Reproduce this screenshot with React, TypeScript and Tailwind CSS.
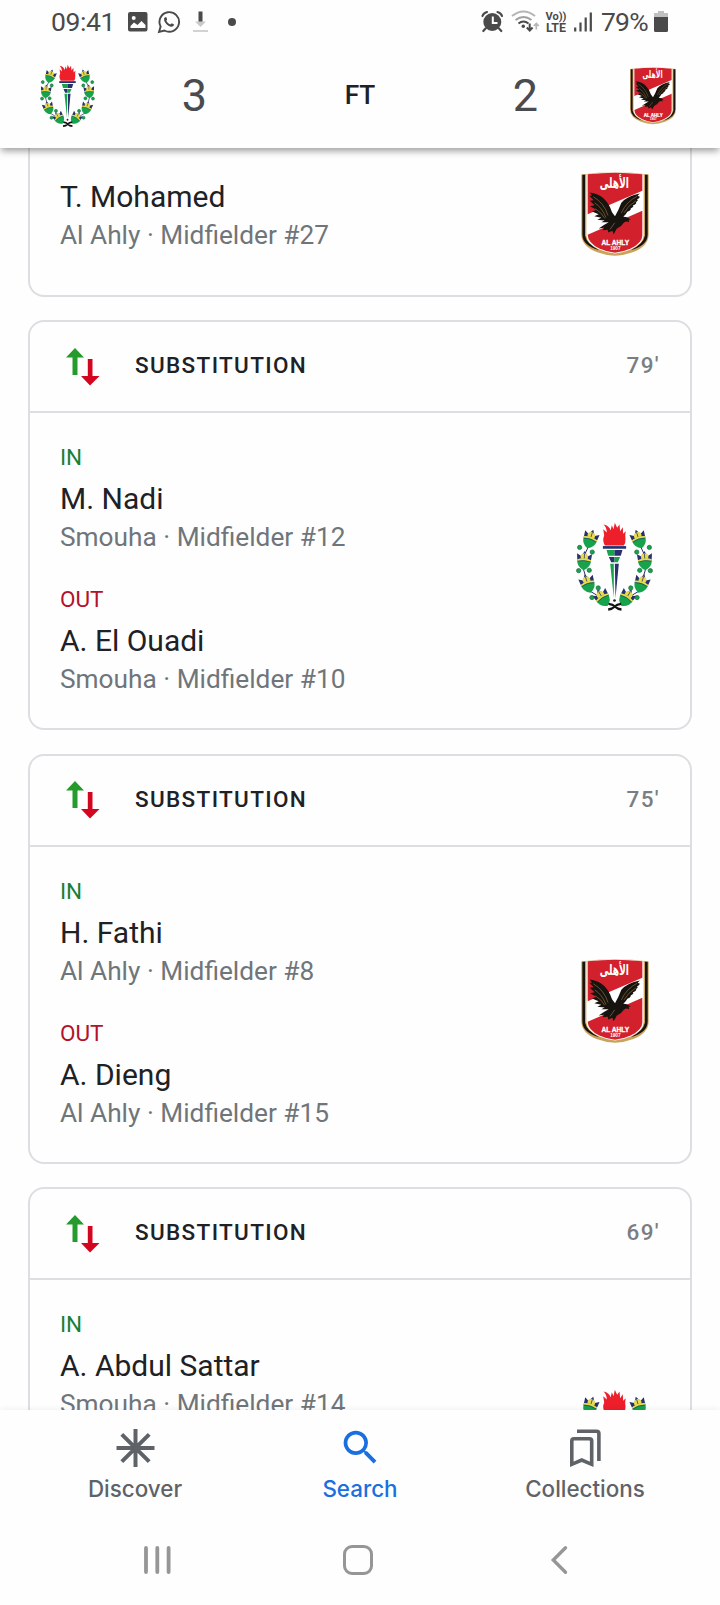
import { MdSearch } from "react-icons/md";

type Team = "smouha" | "ahly";

type Player = { name: string; info: string };

type Substitution = {
  minute: string;
  team: Team;
  playerIn: Player;
  playerOut?: Player;
};

const substitutions: Substitution[] = [
  {
    minute: "79'",
    team: "smouha",
    playerIn: { name: "M. Nadi", info: "Smouha · Midfielder #12" },
    playerOut: { name: "A. El Ouadi", info: "Smouha · Midfielder #10" },
  },
  {
    minute: "75'",
    team: "ahly",
    playerIn: { name: "H. Fathi", info: "Al Ahly · Midfielder #8" },
    playerOut: { name: "A. Dieng", info: "Al Ahly · Midfielder #15" },
  },
  {
    minute: "69'",
    team: "smouha",
    playerIn: { name: "A. Abdul Sattar", info: "Smouha · Midfielder #14" },
  },
];

function AhlyCrest({ className }: { className: string }) {
  return (
    <svg viewBox="60 30 210 260" className={className}>
      <path d="M64 43Q165 30 266 43V222Q266 258 218 276Q190 286 165 287Q140 286 112 276Q64 258 64 222Z" fill="#c9a35c" />
      <path d="M67 44H75V226Q80 252 118 270Q67 256 67 222Z" fill="#17130f" />
      <path d="M263 44H255V226Q250 252 212 270Q263 256 263 222Z" fill="#17130f" />
      <path d="M79 42Q165 30 251 42V226Q250 250 214 267Q188 278 165 280Q142 278 116 267Q80 250 79 226Z" fill="#fff" />
      <path d="M83 42Q165 33 247 42V92L83 162Z" fill="#d2202c" />
      <path d="M247 152V226Q247 248 212 265Q188 276 165 278Q142 276 118 265Q84 249 83 224Z" fill="#d2202c" />
      <path
        d="M89 97Q114 99 132 116Q148 132 156 156L165 168Q176 150 184 128Q200 108 240 100Q228 109 238 108Q242 112 230 118Q238 118 228 126Q232 130 218 136Q224 139 212 145Q214 150 202 155Q198 163 190 170Q204 170 212 179L207 181L207 186Q200 182 192 187Q184 200 170 206L161 222L157 212L145 217L143 209L128 210L132 203L116 205L133 194L146 186L124 186L134 181L112 179L124 173L103 168L116 162L96 154L109 149L90 138L104 135L89 122L101 120L88 107L96 107Z"
        fill="#17130f"
      />
      <path d="M100 110Q132 128 144 166M104 128Q126 142 138 172M106 146Q124 156 134 174M232 108Q200 124 184 158M228 122Q204 136 192 158M164 188L150 208M206 180L211 180" stroke="#8f723f" strokeWidth="2" fill="none" />
      <text x="163" y="84" textAnchor="middle" fontSize="45" fontWeight="700" fill="#fff" fontFamily="'DejaVu Sans', sans-serif" textLength="88" lengthAdjust="spacingAndGlyphs">
        الأهلى
      </text>
      <text x="166" y="255" textAnchor="middle" fontSize="20" fontWeight="900" fill="#fff" stroke="#fff" strokeWidth="1" fontFamily="'Liberation Sans', sans-serif" textLength="83" lengthAdjust="spacingAndGlyphs">
        AL AHLY
      </text>
      <text x="166" y="270" textAnchor="middle" fontSize="14" fontWeight="700" fill="#fff" fontFamily="'Liberation Sans', sans-serif">
        1907
      </text>
    </svg>
  );
}

function Flower({ x, y, angle }: { x: number; y: number; angle: number }) {
  return (
    <g transform={`translate(${x} ${y}) rotate(${angle}) scale(1.08)`}>
      <path d="M-19 -6L-21 -25L-9 -18L0 -33L9 -18L21 -25L19 -6Z" fill="#28306e" />
      <path d="M-9 -8Q-13 -18 -9 -23L0 -27L8 -23Q13 -16 9 -8Z" fill="#eadb4e" />
      <path d="M0 -26V-10" stroke="#28306e" strokeWidth="2" />
      <path d="M-19 -8Q0 -15 19 -8Q20 12 0 21Q-20 12 -19 -8Z" fill="#16a34b" />
      <path d="M-19 -6Q0 -13 19 -6" stroke="#eadb4e" strokeWidth="5" fill="none" />
      <path d="M-19 -3Q0 -9 19 -3" stroke="#28306e" strokeWidth="1.5" fill="none" />
    </g>
  );
}

const berries = [
  [60, 111],
  [98, 125],
  [57, 181],
  [89, 180],
  [97, 262],
  [116, 233],
];

function HalfWreath() {
  return (
    <>
      <path d="M88 105L74 135M70 172L80 205M90 242L124 262" stroke="#28306e" strokeWidth="3" />
      <Flower x={90} y={92} angle={18} />
      <Flower x={73} y={157} angle={4} />
      <Flower x={86} y={226} angle={-18} />
      <Flower x={132} y={268} angle={-32} />
      {berries.map(([cx, cy]) => (
        <circle key={`${cx}-${cy}`} cx={cx} cy={cy} r="6.5" fill="#16a34b" stroke="#14643c" strokeWidth="2" />
      ))}
    </>
  );
}

function SmouhaCrest({ className }: { className: string }) {
  return (
    <svg viewBox="40 30 250 280" className={className}>
      <HalfWreath />
      <g transform="translate(330 0) scale(-1 1)">
        <HalfWreath />
      </g>
      <path
        d="M136 105Q127 90 134 75L131 56L142 66Q141 50 132 42Q150 46 153 60L157 44L162 56L166 37L173 52L180 42L182 62L190 50L191 70L199 62Q196 76 198 84Q199 98 193 105Z"
        fill="#ec1f2b"
      />
      <path d="M130 107H200V115H130Z" fill="#28306e" />
      <path d="M141 119H165V136H146Z" fill="#16a34b" />
      <path d="M165 119H189L184 136H165Z" fill="#28306e" />
      <path d="M148 140H165V156H155Z" fill="#28306e" />
      <path d="M165 140H182L175 156H165Z" fill="#16a34b" />
      <path d="M152 160H163V263Z" fill="#16a34b" />
      <path d="M166 160H178L168 263Z" fill="#28306e" />
      <path d="M147 281Q160 282 166 289Q174 297 186 298M185 281Q172 282 166 289Q158 297 146 298" stroke="#111" strokeWidth="7" fill="none" />
      <circle cx="165" cy="271" r="4" fill="#222" />
    </svg>
  );
}

function Crest({ team, small }: { team: Team; small?: boolean }) {
  if (team === "ahly") {
    return <AhlyCrest className={small ? "w-[48px] h-[59px]" : "w-[70px] h-[87px]"} />;
  }
  return <SmouhaCrest className={small ? "w-[59px] h-[66px]" : "w-[84px] h-[94px]"} />;
}

function StatusBar() {
  return (
    <div className="flex h-[44px] items-center pl-[51px] text-[26.5px] text-[#4a4a4a]">
      <span className="w-[63px] tracking-[-0.4px]">09:41</span>
      <svg width="22" height="24" viewBox="0 0 22 24" className="ml-[13px]">
        <path
          fillRule="evenodd"
          d="M3 2H18.500Q20.500 2 20.500 4V19.500Q20.500 21.500 18.500 21.500H3Q1 21.500 1 19.500V4Q1 2 3 2ZM3.500 18H18.500V15L14.500 11L10.500 15L7 12.500L3.500 16ZM6.700 6A2 2 0 1 0 6.700 10A2 2 0 1 0 6.700 6Z"
          fill="currentColor"
        />
      </svg>
      <svg width="24" height="24" viewBox="0 0 24 24" className="ml-2" fill="none" stroke="currentColor">
        <path d="M2 22L3.600 16.500A9.800 9.800 0 1 1 7.500 20.500Z" strokeWidth="1.900" />
        <path d="M8 7.200Q6.300 8.500 7.300 11Q9.500 15.500 13.800 16.800Q16.300 17 17.300 14.800L14.800 13.200L13.200 14.600Q10.500 13.300 9.300 10.800L10.200 9.500L9.200 7Z" fill="currentColor" stroke="none" />
      </svg>
      <svg width="17" height="24" viewBox="0 0 17 24" className="ml-[11px]">
        <path d="M6.500 1.500H10.500V12H6.500Z" fill="#4a4a4a" />
        <path d="M3 11.500H14L8.500 17Z" fill="#c9c9c9" />
        <path d="M1 21H16" stroke="#d2d2d2" strokeWidth="2" />
      </svg>
      <span className="ml-[19px] size-2 rounded-full bg-[#4a4a4a]" />

      <svg width="23" height="24" viewBox="0 0 23 24" className="ml-[245px]">
        <circle cx="11.300" cy="12" r="9" fill="currentColor" />
        <path d="M1.500 6Q2.500 3 6 2M21 6Q20 3 16.500 2M4.500 18.500L2.300 21M18 18.500L20.300 21" stroke="currentColor" strokeWidth="2.200" strokeLinecap="round" fill="none" />
        <path d="M11.800 6.500V13H16.500" stroke="#fff" strokeWidth="2" fill="none" />
      </svg>
      <svg width="29" height="24" viewBox="0 0 29 24" className="ml-[7px]" fill="none" strokeWidth="2">
        <path d="M1 6Q12.500 -3 24 6" stroke="#b5b5b5" />
        <path d="M4.500 10Q12.500 4 20.500 10" stroke="#a0a0a0" />
        <path d="M7.500 13.500Q12.500 9.500 17.500 13.500" stroke="#4a4a4a" />
        <circle cx="12.300" cy="16.200" r="1.700" fill="#4a4a4a" />
        <path d="M18.700 13.500V20.500M15.800 17.500L18.700 20.500L21.600 17.500" stroke="#4a4a4a" />
        <path d="M25.300 19.500V13.500M22.800 16L25.300 13.500L27.800 16" stroke="#b5b5b5" strokeWidth="1.700" />
      </svg>
      <svg width="22" height="24" viewBox="0 0 22 24" className="ml-[5px]" fill="currentColor" fontFamily="Roboto, sans-serif" fontWeight="700">
        <text x="0.500" y="10" fontSize="11.500" textLength="21" lengthAdjust="spacingAndGlyphs">Vo))</text>
        <text x="1" y="21.500" fontSize="13" textLength="20" lengthAdjust="spacingAndGlyphs">LTE</text>
      </svg>
      <svg width="20" height="24" viewBox="0 0 20 24" className="ml-[6px]" stroke="currentColor" strokeWidth="2.200">
        <path d="M2.200 17.500V21.500M7.500 12.500V21.500M12.700 7.500V21.500M17.800 2.500V21.500" />
      </svg>
      <span className="ml-[8px] w-[48px] tracking-[-0.800px]">79%</span>
      <svg width="16" height="24" viewBox="0 0 16 24" className="ml-1">
        <path d="M5 1H11V3H15V7H1V3H5Z" fill="#c0c0c0" />
        <path d="M1 7H15V20.500Q15 22 13.500 22H2.500Q1 22 1 20.500Z" fill="#4a4a4a" />
      </svg>
    </div>
  );
}

function ScoreHeader() {
  return (
    <header className="relative z-10 h-[148px] shrink-0 bg-[#fefefe] shadow-[0_4px_7px_-1px_rgba(0,0,0,0.38)]">
      <StatusBar />
      <div className="grid h-[103px] grid-cols-[135px_119px_212px_119px_135px] place-items-center text-[#4a4b4f]">
        <Crest team="smouha" small />
        <span className="text-[45px] leading-none">3</span>
        <span className="mt-px text-[26.250px] font-medium text-[#202124]">FT</span>
        <span className="text-[45px] leading-none">2</span>
        <Crest team="ahly" small />
      </div>
    </header>
  );
}

function PlayerInfo({ player }: { player: Player }) {
  return (
    <>
      <p className="text-[30px] leading-[38px] text-[#202124]">{player.name}</p>
      <p className="text-[26.250px] leading-[38px] text-[#70757a]">{player.info}</p>
    </>
  );
}

function SubstitutionCard({ sub }: { sub: Substitution }) {
  return (
    <section className="mt-[23.500px] h-[410px] shrink-0 rounded-[16px] border-2 border-[#dddee1]">
      <div className="flex h-[91px] items-center border-b-2 border-[#dddee1] pr-[30px] pb-px pl-[36px]">
        <svg width="34" height="38" viewBox="0 0 34 38" className="mt-px">
          <path d="M9 0L18 9.500H11.500V27H6.500V9.500H0Z" fill="#259b2b" />
          <path d="M21.800 11H26.500V28H33.500L24 37.500L15 28H21.800Z" fill="#d3061f" />
        </svg>
        <h2 className="ml-[35px] text-[22.500px] font-medium tracking-[1.350px] text-[#202124]">SUBSTITUTION</h2>
        <span className="ml-auto text-[22.500px] font-medium tracking-[1.350px] text-[#7a7e83]">{sub.minute}</span>
      </div>
      <div className="flex items-center justify-between pt-[29px] pr-[34px] pl-[30px]">
        <div className="h-[255px]">
          <p className="mb-2 text-[22.500px] leading-[30px] text-[#188038]">IN</p>
          <PlayerInfo player={sub.playerIn} />
          {sub.playerOut && (
            <>
              <p className="mt-[28px] mb-2 text-[22.500px] leading-[30px] text-[#b3122a]">OUT</p>
              <PlayerInfo player={sub.playerOut} />
            </>
          )}
        </div>
        <div className="flex w-[83px] justify-center pb-[6px]">
          <Crest team={sub.team} />
        </div>
      </div>
    </section>
  );
}

function BottomNav() {
  return (
    <nav className="relative z-10 h-[195px] shrink-0 bg-[#fefefe] shadow-[0_-1px_6px_rgba(0,0,0,0.06)]">
      <div className="grid h-[110px] grid-cols-3 px-[22.500px] pt-[15px] text-center font-[Inter,sans-serif] text-[22.400px] leading-[30px] font-medium text-[#5f6368]">
        <div className="flex flex-col items-center gap-[4px]">
          <svg width="45" height="45" viewBox="0 0 45 45" stroke="currentColor" strokeWidth="4">
            <path d="M22.500 4V42M3.500 23H41.500M8.800 9.300L36.200 36.700M36.200 9.300L8.800 36.700" />
          </svg>
          <span>Discover</span>
        </div>
        <div className="flex flex-col items-center gap-[4px] text-[#1a6fe0]">
          <MdSearch size={45} />
          <span>Search</span>
        </div>
        <div className="flex flex-col items-center gap-[4px]">
          <svg width="45" height="45" viewBox="0 0 45 45" fill="none" stroke="currentColor" strokeWidth="3.600">
            <path d="M8.800 39.300V16Q8.800 13.800 11 13.800H26.500Q28.700 13.800 28.700 16V39.300L18.700 35Z" />
            <path d="M14 6.200H33.500Q35.900 6.200 35.900 8.600V36" />
          </svg>
          <span>Collections</span>
        </div>
      </div>
      <div className="flex items-center pt-[25px] pl-[143px]">
        <svg width="29" height="30" viewBox="0 0 29 30" stroke="#969696" strokeWidth="3.800" strokeLinecap="round">
          <path d="M3 3V27M14.300 3V27M25.600 3V27" />
        </svg>
        <span className="ml-[171px] size-[30px] rounded-[9px] border-[3.500px] border-[#969696]" />
        <svg width="20" height="30" viewBox="0 0 20 30" className="ml-[177px]" fill="none" stroke="#969696" strokeWidth="3.400" strokeLinecap="round">
          <path d="M15.500 2.800L3.300 15L15.500 27.200" />
        </svg>
      </div>
    </nav>
  );
}

export default function App() {
  return (
    <div className="flex h-[1605px] w-[720px] flex-col overflow-hidden bg-[#fefefe] font-[Roboto,sans-serif]">
      <ScoreHeader />
      <main className="flex min-h-0 flex-1 flex-col overflow-hidden px-[28px]">
        <section className="flex h-[148.500px] shrink-0 justify-between rounded-b-[16px] border-2 border-t-0 border-[#dddee1] pt-[30px] pr-[34px] pl-[30px]">
          <div>
            <PlayerInfo player={{ name: "T. Mohamed", info: "Al Ahly · Midfielder #27" }} />
          </div>
          <div className="mt-[-8px] flex w-[83px] items-start justify-center">
            <Crest team="ahly" />
          </div>
        </section>
        {substitutions.map((sub) => (
          <SubstitutionCard key={sub.minute} sub={sub} />
        ))}
      </main>
      <BottomNav />
    </div>
  );
}
